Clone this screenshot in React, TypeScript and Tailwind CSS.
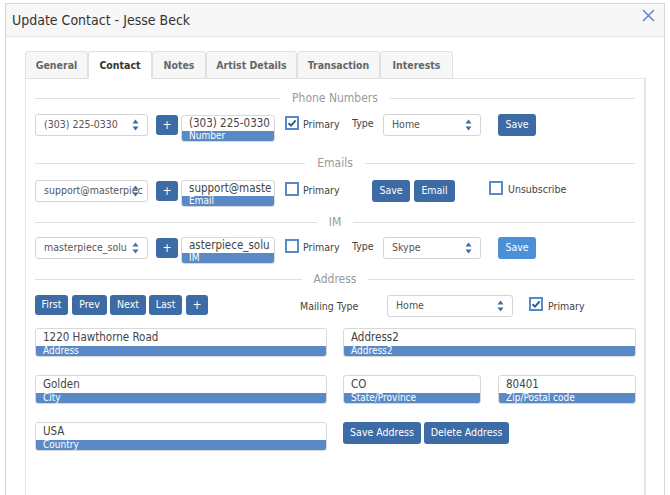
import React from "react";

const tabs = ["General", "Contact", "Notes", "Artist Details", "Transaction", "Interests"];
const tabWidths = ["w-[63px]", "w-[64px]", "w-[54px]", "w-[91px]", "w-[83px]", "w-[73px]"];

function Arrows() {
  return (
    <svg width="7" height="12" viewBox="0 0 7 12" className="absolute right-[8px] top-[4px]">
      <path d="M3.5 0.5 L6.5 4.5 L0.5 4.5 Z" fill="#3c6ba5" />
      <path d="M3.5 11.5 L6.5 7.5 L0.5 7.5 Z" fill="#3c6ba5" />
    </svg>
  );
}

function Select({ w, value }: { w: string; value: string }) {
  return (
    <div className={`${w} h-[22px] shrink-0 relative border border-[#d4d4d4] rounded-[3px] bg-white flex items-center pl-[8px]`}>
      <span className="whitespace-nowrap text-[10.5px] text-[#555]">{value}</span>
      <Arrows />
    </div>
  );
}

function Plus() {
  return (
    <div className="w-[22px] h-[20px] mt-[1px] shrink-0 rounded-[3px] bg-[#3c6ba5] text-white text-[12px] flex items-center justify-center">
      +
    </div>
  );
}

function Field({ w, value, label, tall }: { w: string; value: string; label: string; tall?: boolean }) {
  return (
    <div className={`${w} shrink-0 rounded-[3px] border border-[#d8d8d8] overflow-hidden bg-white flex flex-col`}>
      <div className={`${tall ? "h-[17px] leading-[16px]" : "h-[15px] leading-[15px]"} text-[11.5px] px-[7px] text-[#444] whitespace-nowrap`}>
        {value}
      </div>
      <div className="h-[10px] bg-[#5a8ac6] text-white text-[10px] leading-[10px] px-[7px] whitespace-nowrap">
        {label}
      </div>
    </div>
  );
}

function Check({ checked }: { checked?: boolean }) {
  return (
    <div className="w-[14px] h-[14px] shrink-0 border-2 border-[#5a8ac6] bg-white flex items-center justify-center">
      {checked && (
        <svg width="10" height="10" viewBox="0 0 10 10">
          <path d="M1.5 5.2 L4 7.6 L8.6 2.4" stroke="#2f5c98" strokeWidth="2" fill="none" />
        </svg>
      )}
    </div>
  );
}

function Btn({ w, children, light }: { w: string; children: React.ReactNode; light?: boolean }) {
  return (
    <div className={`${w} h-[22px] shrink-0 rounded-[3px] ${light ? "bg-[#4a8fd8]" : "bg-[#3c6ba5]"} text-white text-[10.5px] flex items-center justify-center whitespace-nowrap`}>
      {children}
    </div>
  );
}

function NavBtn({ w, children }: { w: string; children: React.ReactNode }) {
  return (
    <div className={`${w} h-[20px] shrink-0 rounded-[3px] bg-[#3c6ba5] text-white text-[10.5px] flex items-center justify-center`}>
      {children}
    </div>
  );
}

function Section({ title, className }: { title: string; className: string }) {
  return (
    <div className={`flex items-center h-[16px] ${className}`}>
      <div className="flex-1 h-px bg-[#e0e0e0]" />
      <span className="px-[12px] text-[12px] text-[#999]">{title}</span>
      <div className="flex-1 h-px bg-[#e0e0e0]" />
    </div>
  );
}

export default function App() {
  return (
    <div className="w-[670px] h-[495px] overflow-hidden bg-white pt-[3px] pl-[5px] font-['DejaVu_Sans_Condensed','Liberation_Sans',sans-serif]">
      <div className="w-[660px] h-[520px] border border-[#d6d6d6]">
        {/* header */}
        <div className="h-[33px] bg-[#f7f7f7] border-b border-[#e6e6e6] flex items-center justify-between pl-[6px] pr-[9px]">
          <span className="text-[14px] text-[#333]">Update Contact - Jesse Beck</span>
          <svg width="13" height="13" viewBox="0 0 13 13" className="-mt-[10px]">
            <path d="M1 1 L12 12 M12 1 L1 12" stroke="#5b8bc6" strokeWidth="1.5" />
          </svg>
        </div>

        <div className="pt-[14px] pl-[19px]">
          {/* tabs */}
          <div className="flex h-[28px] -mb-px relative">
            {tabs.map((t, i) => (
              <div
                key={t}
                className={`${tabWidths[i]} h-[28px] pt-px flex items-center justify-center rounded-t-[3px] border border-[#e0e0e0] text-[10.5px] font-bold ${
                  i === 1 ? "bg-white border-b-white text-[#333]" : "bg-[#f7f7f7] text-[#666] border-b-[#e0e0e0]"
                }`}
              >
                {t}
              </div>
            ))}
          </div>

          {/* panel */}
          <div className="w-[621px] h-[430px] border border-[#e6e6e6] border-r-2 px-[9px] pt-[11px]">
            <Section title="Phone Numbers" className="" />
            <div className="flex items-start mt-[8px] h-[28px]">
              <Select w="w-[113px]" value="(303) 225-0330" />
              <div className="ml-[8px]"><Plus /></div>
              <div className="ml-[3px] mt-[1px]"><Field w="w-[94px]" value="(303) 225-0330" label="Number" /></div>
              <div className="ml-[10px] mt-[2px]"><Check checked /></div>
              <span className="ml-[4px] w-[49px] mt-[3px] text-[10.5px] text-[#444]">Primary</span>
              <span className="w-[31px] mt-[2px] text-[10.5px] text-[#444]">Type</span>
              <Select w="w-[98px]" value="Home" />
              <div className="ml-[17px]"><Btn w="w-[38px]">Save</Btn></div>
            </div>

            <Section title="Emails" className="mt-[13px]" />
            <div className="flex items-start mt-[9px] h-[26px]">
              <Select w="w-[113px]" value="support@masterpiec" />
              <div className="ml-[8px]"><Plus /></div>
              <div className="ml-[3px]"><Field w="w-[94px]" value="support@maste" label="Email" /></div>
              <div className="ml-[10px] mt-[2px]"><Check /></div>
              <span className="ml-[4px] w-[49px] mt-[3px] text-[10.5px] text-[#444]">Primary</span>
              <div className="ml-[20px]"><Btn w="w-[38px]">Save</Btn></div>
              <div className="ml-[4px]"><Btn w="w-[41px]">Email</Btn></div>
              <div className="ml-[34px] mt-[1px]"><Check /></div>
              <span className="ml-[5px] mt-[2px] text-[10.5px] text-[#444]">Unsubscribe</span>
            </div>

            <Section title="IM" className="mt-[8px]" />
            <div className="flex items-start mt-[7px] h-[26px]">
              <Select w="w-[113px]" value="masterpiece_solu" />
              <div className="ml-[8px]"><Plus /></div>
              <div className="ml-[3px]"><Field w="w-[94px]" value="asterpiece_solu" label="IM" /></div>
              <div className="ml-[10px] mt-[2px]"><Check /></div>
              <span className="ml-[4px] w-[49px] mt-[3px] text-[10.5px] text-[#444]">Primary</span>
              <span className="w-[31px] mt-[2px] text-[10.5px] text-[#444]">Type</span>
              <Select w="w-[98px]" value="Skype" />
              <div className="ml-[17px]"><Btn w="w-[38px]" light>Save</Btn></div>
            </div>

            <Section title="Address" className="mt-[8px]" />
            <div className="flex items-start mt-[8px] h-[22px]">
              <NavBtn w="w-[33px]">First</NavBtn>
              <div className="ml-[4px]"><NavBtn w="w-[35px]">Prev</NavBtn></div>
              <div className="ml-[3px]"><NavBtn w="w-[36px]">Next</NavBtn></div>
              <div className="ml-[3px]"><NavBtn w="w-[33px]">Last</NavBtn></div>
              <div className="ml-[4px]"><NavBtn w="w-[22px]"><span className="text-[12px]">+</span></NavBtn></div>
              <span className="ml-[92px] w-[87px] mt-[4px] text-[10.5px] text-[#444]">Mailing Type</span>
              <Select w="w-[126px]" value="Home" />
              <div className="ml-[16px] mt-[2px]"><Check checked /></div>
              <span className="ml-[5px] mt-[4px] text-[10.5px] text-[#444]">Primary</span>
            </div>

            <div className="flex items-start mt-[11px]">
              <Field w="w-[292px]" value="1220 Hawthorne Road" label="Address" tall />
              <div className="ml-[16px]"><Field w="w-[293px]" value="Address2" label="Address2" tall /></div>
            </div>

            <div className="flex items-start mt-[18px]">
              <Field w="w-[292px]" value="Golden" label="City" tall />
              <div className="ml-[16px]"><Field w="w-[138px]" value="CO" label="State/Province" tall /></div>
              <div className="ml-[17px]"><Field w="w-[138px]" value="80401" label="Zip/Postal code" tall /></div>
            </div>

            <div className="flex items-start mt-[18px]">
              <Field w="w-[292px]" value="USA" label="Country" tall />
              <div className="ml-[16px]"><Btn w="w-[78px]">Save Address</Btn></div>
              <div className="ml-[3px]"><Btn w="w-[85px]">Delete Address</Btn></div>
            </div>
          </div>
        </div>
      </div>
    </div>
  );
}
